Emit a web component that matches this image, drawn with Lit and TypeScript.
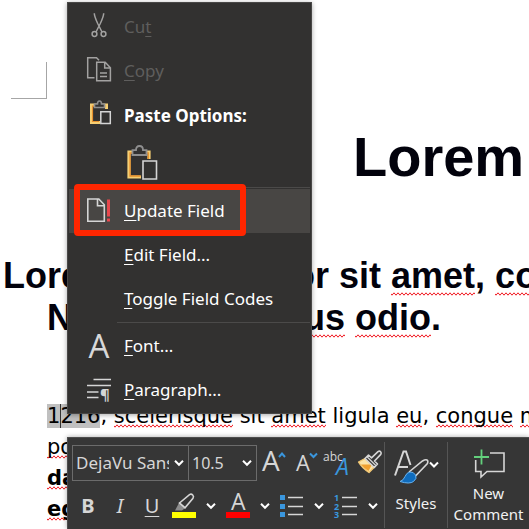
import { LitElement, html, css, svg } from "lit";
import { customElement } from "lit/decorators.js";

const chevron = html`<svg class="chevron" width="10" height="8" viewBox="0 0 10 8" aria-hidden="true">
  <path d="M1 1.8 5 5.8 9 1.8" fill="none" stroke="#fff" stroke-width="2" />
</svg>`;

/* The document behind the pop-ups. */
@customElement("doc-sheet")
export class DocSheet extends LitElement {
  static styles = css`
    :host {
      display: block;
      white-space: nowrap;
      color: #000;
      font-family: "DejaVu Sans", sans-serif;
    }
    .margin-mark {
      width: 35px;
      height: 36px;
      margin: 62px 0 26px 11px;
      border: solid #a6a6a6;
      border-width: 0 1px 1px 0;
    }
    h1,
    h2 {
      margin: 0;
      font-family: "Liberation Sans", Arial, sans-serif;
      font-weight: 700;
      color: #02020c;
    }
    h1 {
      padding-left: 353px;
      font-size: 56px;
      line-height: 64px;
    }
    h2 {
      margin-top: 66px;
      padding-left: 3px;
      font-size: 36px;
      line-height: 42px;
    }
    .second {
      display: block;
      padding-left: 44px;
    }
    p {
      margin: 62px 0 0 47px;
      font-size: 21px;
      line-height: 31px;
    }
    .typo {
      background: url("data:image/svg+xml,%3Csvg xmlns='http://www.w3.org/2000/svg' width='4' height='4' viewBox='0 0 4 4'%3E%3Cpath d='M-1 .8 1 3.2 3 .8 5 3.2' fill='none' stroke='%23f01820' stroke-width='1'/%3E%3C/svg%3E")
        repeat-x left bottom;
    }
    .field {
      background: #c0c0c0;
    }
    .caret {
      box-shadow: inset 1px 0 #333;
    }
  `;
  render() {
    return html`
      <div class="margin-mark"></div>
      <h1>Lorem ipsum</h1>
      <h2>
        Lorem ipsum dolor sit <span class="typo">amet</span>, <span class="typo">consectetur</span>
        <span class="second">Nunc ac <span class="typo">faucibus</span> <span class="typo">odio</span>.</span>
      </h2>
      <p>
        <span class="field">1<span class="caret">216</span></span>, <span class="typo">scelerisque</span> sit
        <span class="typo">amet</span> ligula <span class="typo">eu</span>, <span class="typo">congue</span>
        <span class="typo">massa</span><br />
        <span class="typo">porttitor</span><br />
        <b class="typo">dapibus</b><br />
        <b class="typo">egestas</b>
      </p>
    `;
  }
}

@customElement("context-menu")
export class ContextMenu extends LitElement {
  static styles = css`
    :host {
      display: block;
      box-sizing: border-box;
      padding: 2px 1px 1px;
      border: 1px solid #494847;
      background: #323130;
      color: #fff;
      font: 17px/24px "Noto Sans", "Open Sans", sans-serif;
      box-shadow: 0 1px 5px rgba(0, 0, 0, 0.35);
    }
    button {
      font: inherit;
      color: inherit;
      background: none;
      border: 0;
      margin: 0;
      padding: 0;
    }
    .item,
    .caption {
      position: relative;
      box-sizing: border-box;
      display: flex;
      align-items: center;
      gap: 11px;
      width: 100%;
      height: 44px;
      padding: 0 0 0 16px;
      text-align: left;
      white-space: nowrap;
    }
    .item:disabled {
      color: #5f5e5d;
    }
    .caption {
      height: 46px;
      font-weight: 700;
    }
    .active {
      background: #484644;
    }
    .ring {
      position: absolute;
      inset: -5px 64px -3px 5px;
      border: 6px solid #ff2600;
      border-radius: 4px;
    }
    .icon {
      flex: none;
      width: 28px;
      height: 28px;
      overflow: visible;
    }
    .letter {
      flex: none;
      width: 28px;
      font: 400 33px/28px "Open Sans", "Noto Sans", sans-serif;
      color: #d8d8d8;
      text-align: center;
    }
    .paste {
      display: flex;
      padding: 5px 0 6px 57px;
    }
    .paste svg {
      display: block;
    }
    hr {
      height: 1px;
      margin: 1px 0 1px 48px;
      border: 0;
      background: #4b4a49;
    }
    u {
      text-decoration-thickness: 1px;
      text-underline-offset: 3px;
      text-decoration-skip-ink: none;
    }
  `;
  render() {
    return html`
      <button class="item" disabled>
        <svg class="icon" viewBox="0 0 28 28" fill="none" stroke="#a3a2a1" stroke-width="1.5">
          <path d="M9.3.2c0 3 1.4 6 3.4 10.3L17 19M18.7.2c0 3-1.4 6-3.4 10.3L11 19" />
          <circle cx="9.5" cy="21" r="2.4" /><circle cx="18.5" cy="21" r="2.4" />
        </svg>
        <span>Cu<u>t</u></span>
      </button>
      <button class="item" disabled>
        <svg class="icon" viewBox="0 0 28 28" fill="none" stroke="#a3a2a1" stroke-width="1.5">
          <path d="M9.5 20.7H2.7V.8H11.5L14 3.3" />
          <path d="M11.7 5.3h8.5l5.2 5.4v13H11.7zM19.7 5.5v5.5h5.5M15 16h7M15 19.5h7" />
        </svg>
        <span><u>C</u>opy</span>
      </button>
      <div class="caption">
        <svg class="icon" viewBox="0 0 28 28" fill="none">
          <path d="M15 20.5H6.5V3H21.5V7" stroke="#f6cf73" stroke-width="3" />
          <path d="M14 19.5H7.5V4H20.5" stroke="#e8912d" stroke-width="1.2" />
          <path d="M9.5 5.5V2h3q0-3 2-3t2 3h3v3.5z" fill="#323130" stroke="#8f8f8f" stroke-width="1.6" />
          <path d="M15.8 9.8h9.5v11.7h-9.5z" fill="#323130" stroke="#d5d5d5" stroke-width="1.5" />
        </svg>
        <span>Paste Options:</span>
      </div>
      <div class="paste">
        <button aria-label="Keep source formatting">
          <svg width="32" height="36" viewBox="0 0 32 36" fill="none">
            <path d="M15 33H3V8H23V15" stroke="#f6cf73" stroke-width="3.2" />
            <path d="M14.5 32H4V9H22.3V15" stroke="#e8912d" stroke-width="1.3" />
            <path d="M6.5 11V6.2H10Q10 2 13.5 2T17 6.2h3.5V11z" fill="#323130" stroke="#8f8f8f" stroke-width="1.8" />
            <path d="M17 17h13.5v18H17z" fill="#323130" stroke="#d5d5d5" stroke-width="1.6" />
          </svg>
        </button>
      </div>
      <hr />
      <button class="item active">
        <svg class="icon" viewBox="0 0 28 28" fill="none" stroke="#d5d5d5" stroke-width="1.6">
          <path d="M2.8 2h11l5.5 5.8v16.5H2.8zM12.5 2.2V8.8H19" />
          <path d="M23.5 2.5v17M23.5 21.500v3" stroke="#e8474d" stroke-width="3" />
        </svg>
        <span><u>U</u>pdate Field</span>
        <span class="ring"></span>
      </button>
      <button class="item"><span class="icon"></span><span><u>E</u>dit Field...</span></button>
      <button class="item"><span class="icon"></span><span><u>T</u>oggle Field Codes</span></button>
      <hr />
      <button class="item"><span class="letter">A</span><span><u>F</u>ont...</span></button>
      <button class="item">
        <svg class="icon" viewBox="0 0 28 28" fill="none" stroke="#d5d5d5" stroke-width="1.6">
          <path d="M8.5 3.5H26M2 9.5H26M2 16H13.5M2 21.5H13.5" />
          <text x="15" y="24" font-size="15" font-weight="700" fill="#d5d5d5" stroke="none">¶</text>
        </svg>
        <span><u>P</u>aragraph...</span>
      </button>
    `;
  }
}

@customElement("mini-toolbar")
export class MiniToolbar extends LitElement {
  static styles = css`
    :host {
      display: grid;
      grid-template-columns: 316px 63px 1fr;
      box-sizing: border-box;
      border: solid #4d4d4d;
      border-width: 1px 0 0 1px;
      background: #363636;
      color: #f2f2f2;
      font: 15px/21px "Noto Sans", "Open Sans", sans-serif;
      box-shadow: 0 0 5px rgba(0, 0, 0, 0.35);
    }
    button {
      font: inherit;
      color: inherit;
      background: none;
      border: 0;
      margin: 0;
      padding: 0;
    }
    svg {
      display: block;
      flex: none;
      overflow: visible;
    }
    .tools {
      display: grid;
      gap: 7px;
      align-content: start;
      padding: 7px 0 5px 4px;
    }
    .row {
      display: flex;
      align-items: center;
      height: 36px;
    }
    .combo {
      position: relative;
      box-sizing: border-box;
      display: flex;
      align-items: center;
      height: 36px;
      border: 1px solid #6b6b6b;
    }
    .combo .chevron {
      position: absolute;
      right: 4px;
      pointer-events: none;
    }
    .family {
      width: 117px;
    }
    .size {
      width: 68px;
      border-left: 0;
    }
    select {
      appearance: none;
      width: 100%;
      height: 34px;
      margin: 0 19px 0 0;
      padding: 0 0 0 3px;
      border: 0;
      background: none;
      color: #d6d6d6;
      font: 16px/24px "Noto Sans", "Open Sans", sans-serif;
    }
    .family select {
      font-size: 17px;
    }
    .glyphs {
      display: flex;
      justify-content: space-between;
      width: 123px;
      padding-left: 4px;
    }
    .tool {
      width: 28px;
      height: 28px;
    }
    .letter {
      width: 32px;
      height: 32px;
      color: #d6d6d6;
      font-size: 20px;
      line-height: 28px;
    }
    .bold {
      font-weight: 700;
    }
    .italic {
      font-style: italic;
    }
    .under {
      text-decoration: underline 1px;
      text-underline-offset: 3px;
      margin-right: 2px;
    }
    .more {
      display: grid;
      place-items: center;
      width: 26px;
      height: 28px;
    }
    .group {
      display: flex;
      flex-direction: column;
      align-items: center;
      gap: 10px;
      margin: 4px 0 1px;
      padding-top: 7px;
      border-left: 1px solid #555;
      text-align: center;
    }
    .comment {
      gap: 3px;
      padding-top: 6px;
    }
    text {
      font-family: "Open Sans", "Noto Sans", sans-serif;
      fill: #d6d6d6;
    }
    .blue {
      fill: #3a96dd;
    }
    .digit {
      font-weight: 700;
    }
  `;

  private more(label: string) {
    return html`<button class="more" aria-label=${label}>${chevron}</button>`;
  }

  render() {
    const rows = [5.5, 14.5, 22.5];
    return html`
      <div class="tools">
        <div class="row">
          <label class="combo family">
            <select aria-label="Font">
              <option>DejaVu Sans</option>
            </select>
            ${chevron}
          </label>
          <label class="combo size">
            <select aria-label="Font size">
              <option>10.5</option>
            </select>
            ${chevron}
          </label>
          <div class="glyphs">
            <button class="tool" aria-label="Grow font">
              <svg width="28" height="28" viewBox="0 0 28 28">
                <text x="1" y="22" font-size="28">A</text>
                <path d="M18 8l3-3.5L24 8" fill="none" stroke="#3a96dd" stroke-width="2" />
              </svg>
            </button>
            <button class="tool" aria-label="Shrink font">
              <svg width="28" height="28" viewBox="0 0 28 28">
                <text x="3" y="22" font-size="22">A</text>
                <path d="M17 4.5l3.5 3.5L24 4.5" fill="none" stroke="#3a96dd" stroke-width="2" />
              </svg>
            </button>
            <button class="tool" aria-label="Text effects">
              <svg width="28" height="28" viewBox="0 0 28 28">
                <text x="-1" y="12" font-size="12">abc</text>
                <text class="blue" x="12" y="26" font-size="23" font-style="italic">A</text>
              </svg>
            </button>
            <button class="tool" aria-label="Format painter">
              <svg width="28" height="28" viewBox="0 0 28 28" fill="none" stroke-linejoin="round">
                <path d="M2.5 13 9 9.5 18 18.5 13 23.5Q6 19 2.5 13z" fill="#fbe3a6" stroke="#f2c772" stroke-width="1.4" />
                <path d="M5 15.5h11l-3.5 6.5Q8 19.5 5 15.5z" fill="#f0a030" />
                <path d="M9 9.5 12.5 6l3 2.8L22 2.6q1.5-1 2.6.2t.2 2.6L18.5 12l3 3-3.2 3.5z" fill="#363636" stroke="#d6d6d6" stroke-width="1.6" />
                <path d="M11 7.8l9 9" stroke="#d6d6d6" stroke-width="1.3" />
              </svg>
            </button>
          </div>
        </div>
        <div class="row">
          <button class="letter bold">B</button>
          <button class="letter italic">I</button>
          <button class="letter under">U</button>
          <button class="tool" aria-label="Highlight">
            <svg width="28" height="28" viewBox="0 0 28 28" fill="none">
              <path d="M5 18.5 9.5 10l6.5 5.5-4 3z" fill="#8c8c8c" />
              <path d="M9.5 11 19.5 2.6q1.8-1 3.2.4t.3 3.2L15 15.8z" stroke="#d6d6d6" stroke-width="1.6" />
              <path d="M2 20h24v6H2z" fill="#ff0" />
            </svg>
          </button>
          ${this.more("Highlight colours")}
          <button class="tool" aria-label="Font colour">
            <svg width="28" height="28" viewBox="0 0 28 28">
              <text x="7" y="18" font-size="23">A</text>
              <path d="M2 20h24v6H2z" fill="red" />
            </svg>
          </button>
          ${this.more("Font colours")}
          <button class="tool" aria-label="Bullets">
            <svg width="28" height="28" viewBox="0 0 28 28">
              ${rows.map(
                (y) => svg`<rect x="2" y=${y - 2.5} width="5" height="5" fill="#3a96dd" />
                  <path d=${`M10 ${y}H25`} stroke="#d6d6d6" stroke-width="1.5" />`
              )}
            </svg>
          </button>
          ${this.more("Bullet library")}
          <button class="tool" aria-label="Numbering">
            <svg width="28" height="28" viewBox="0 0 28 28">
              ${rows.map(
                (y, i) => svg`<text class="blue digit" x="2" y=${y + 3.5} font-size="9">${i + 1}</text>
                  <path d=${`M10 ${y}H25`} stroke="#d6d6d6" stroke-width="1.5" />`
              )}
            </svg>
          </button>
          ${this.more("Numbering library")}
        </div>
      </div>
      <button class="group">
        <svg width="44" height="34" viewBox="0 0 44 34" fill="none">
          <path d="M1 26.5 9.5 2.5h2.5L16.5 16M4.5 18H14" stroke="#d6d6d6" stroke-width="2" />
          <path d="M15 23 28.5 12q3-1.8 4.5-1t.4 3.5L21.5 27" stroke="#d6d6d6" stroke-width="1.6" />
          <path d="M6 32.5q3.5-1 5-5t5-4.5 5.5 3-2 6.5-13.5 0z" fill="#0f6cbd" stroke="#69b3f0" stroke-width="1" />
          <path d="M36 13.5l4 4 4-4" stroke="#fff" stroke-width="2" />
        </svg>
        <span>Styles</span>
      </button>
      <button class="group comment">
        <svg width="32" height="32" viewBox="0 0 32 32" fill="none">
          <path d="M17 5H31V23.5H14L8 29V23.5H2.7V12" stroke="#d6d6d6" stroke-width="1.6" />
          <path d="M8.5 1.5V16.5M1 9H16" stroke="#63d07c" stroke-width="1.8" />
        </svg>
        <span>New<br />Comment</span>
      </button>
    `;
  }
}

@customElement("app-root")
export class AppRoot extends LitElement {
  static styles = css`
    :host {
      position: relative;
      display: flow-root;
      height: 100vh;
      overflow: hidden;
      background: #fff;
    }
    context-menu {
      position: absolute;
      left: 67px;
      top: 2px;
      width: 245px;
    }
    mini-toolbar {
      position: absolute;
      left: 67px;
      right: 0;
      top: 437px;
    }
  `;
  render() {
    return html`<doc-sheet></doc-sheet><context-menu></context-menu><mini-toolbar></mini-toolbar>`;
  }
}
